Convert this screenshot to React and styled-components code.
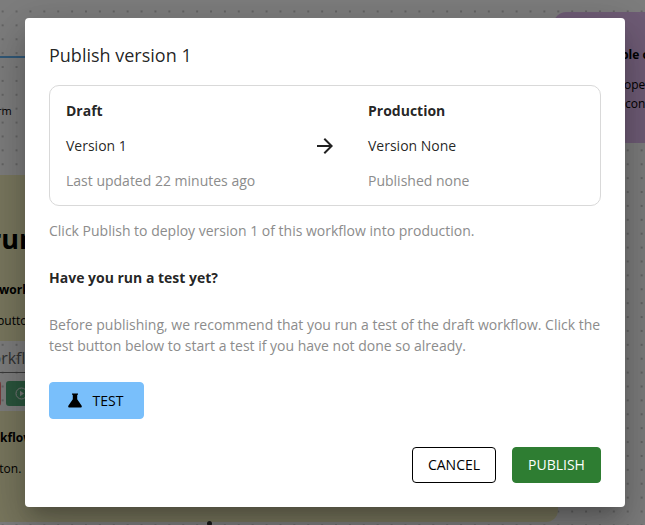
import React from "react";
import styled, { createGlobalStyle } from "styled-components";

const GlobalStyle = createGlobalStyle`
  * { box-sizing: border-box; }
  body { margin: 0; font-family: "Open Sans", sans-serif; overflow: hidden; }
  p, h2, h3 { margin: 0; }
`;

const Canvas = styled.div`
  position: relative;
  width: 645px;
  height: 525px;
  overflow: hidden;
  background-color: #fafafa;
  background-image: radial-gradient(circle, #999 0.4px, transparent 1px);
  background-size: 13.9px 13.9px;
  background-position: -4.3px 4.5px;
`;

const Note = styled.section`
  position: absolute;
  left: ${(p) => p.$x}px;
  top: ${(p) => p.$y}px;
  width: ${(p) => p.$w}px;
  height: ${(p) => p.$h}px;
  border-radius: 12px;
  background: ${(p) => p.$color};
`;

const CanvasText = styled.span`
  position: absolute;
  left: ${(p) => p.$x}px;
  top: ${(p) => p.$y}px;
  font-size: ${(p) => p.$size || 12}px;
  font-weight: ${(p) => (p.$bold ? 700 : 400)};
  line-height: 20px;
  color: ${(p) => p.$color || "#000"};
  white-space: nowrap;
`;

const Edge = styled.div`
  position: absolute;
  left: 0;
  top: 55.5px;
  width: 80px;
  height: 2px;
  background: #62b0ee;
`;

const NodeLine = styled.div`
  position: absolute;
  left: 0;
  top: 372px;
  width: 80px;
  height: 1px;
  background: #777;
`;

const NodeButton = styled.div`
  position: absolute;
  left: ${(p) => p.$x}px;
  top: 381px;
  width: ${(p) => p.$w}px;
  height: 25px;
  display: flex;
  align-items: center;
  padding-left: 9px;
  border-radius: 3px;
  background: ${(p) => p.$color};
`;

const Handle = styled.div`
  position: absolute;
  left: 207px;
  top: 521px;
  width: 5px;
  height: 5px;
  border-radius: 50%;
  background: #333;
`;

const Backdrop = styled.div`
  position: absolute;
  inset: 0;
  display: flex;
  align-items: flex-start;
  justify-content: center;
  padding: 18px 5px 0 10px;
  background: rgba(0, 0, 0, 0.5);
`;

const Dialog = styled.div`
  width: 600px;
  height: 489px;
  padding: 24px;
  border-radius: 4px;
  background: #fff;
  color: rgba(0, 0, 0, 0.87);
  display: flex;
  flex-direction: column;
  align-items: stretch;
  box-shadow: 0 11px 15px -7px rgba(0, 0, 0, 0.2),
    0 24px 38px 3px rgba(0, 0, 0, 0.14), 0 9px 46px 8px rgba(0, 0, 0, 0.12);
`;

const Title = styled.h2`
  font-size: 18px;
  line-height: 27px;
  font-weight: 400;
`;

const VersionCard = styled.div`
  display: grid;
  grid-template-columns: 247px 55px 1fr;
  align-items: center;
  height: 121px;
  margin-top: 16px;
  padding: 0 16px;
  border: 1px solid #d9d9d9;
  border-radius: 10px;
`;

const Version = styled.div`
  display: flex;
  flex-direction: column;
  gap: 14px;
`;

const Text = styled.p`
  font-size: 14px;
  line-height: 21px;
  font-weight: ${(p) => (p.$bold ? 700 : 400)};
  color: ${(p) => (p.$muted ? "#8c8c8c" : "rgba(0, 0, 0, 0.87)")};
`;

const Intro = styled(Text)`
  margin-top: 14px;
`;

const Question = styled(Text)`
  margin-top: 26px;
`;

const Advice = styled(Text)`
  margin-top: 26px;
`;

const Button = styled.button`
  display: flex;
  align-items: center;
  justify-content: center;
  width: ${(p) => p.$w}px;
  height: 36px;
  padding: 0;
  border: 1px solid ${(p) => p.$border || p.$bg};
  border-radius: 4px;
  background: ${(p) => p.$bg};
  color: ${(p) => p.$color || "#000"};
  font: 400 14px/24px "Open Sans", sans-serif;
`;

const TestButton = styled(Button)`
  height: 37px;
  margin-top: 26px;
  padding-right: 2px;
  gap: 11px;
`;

const Actions = styled.div`
  display: flex;
  justify-content: flex-end;
  gap: 16px;
  margin-top: 28px;
`;

const FlaskIcon = () => (
  <svg width="14" height="15" viewBox="0 0 14 15">
    <path d="M4 .5h6v1.300h-.8v4.400l4.300 6.300c.7 1.100.1 2-.9 2H1.400c-1 0-1.600-.9-.9-2l4.300-6.300V1.800H4z" />
  </svg>
);

const ArrowIcon = () => (
  <svg width="24" height="24" viewBox="0 0 24 24" fill="rgba(0,0,0,.87)">
    <path d="m12 4-1.410 1.410L16.170 11H4v2h12.170l-5.580 5.590L12 20l8-8z" />
  </svg>
);

const PlayIcon = () => (
  <svg width="13" height="13" viewBox="0 0 13 13">
    <circle cx="6.500" cy="6.500" r="5.500" fill="none" stroke="#eee" />
    <path d="M5 3.800v5.400L9 6.500z" fill="#eee" />
  </svg>
);

export default function App() {
  return (
    <>
      <GlobalStyle />
      <Canvas>
        <Edge />
        <CanvasText $x={-3} $y={101} $size={11}>rm</CanvasText>
        <Note $x={-30} $y={175} $w={588} $h={166} $color="#f2efbc" />
        <Note $x={-30} $y={411} $w={588} $h={111} $color="#f2efbc" />
        <Note $x={554} $y={12} $w={120} $h={131} $color="#dfb8ed" />
        <CanvasText $x={-11} $y={229} $size={27} $bold>run</CanvasText>
        <CanvasText $x={-1} $y={280} $bold>workflow</CanvasText>
        <CanvasText $x={-3} $y={311}>button</CanvasText>
        <CanvasText $x={-8.5} $y={348} $size={16} $color="#666">orkflow</CanvasText>
        <NodeLine />
        <NodeButton $x={-20} $w={21} $color="#ee7b7b" />
        <NodeButton $x={6} $w={70} $color="#55aa7b"><PlayIcon /></NodeButton>
        <CanvasText $x={0} $y={428} $bold>kflow</CanvasText>
        <CanvasText $x={-5} $y={459}>tton.</CanvasText>
        <CanvasText $x={621} $y={45} $bold>ble of</CanvasText>
        <CanvasText $x={624} $y={75}>oper</CanvasText>
        <CanvasText $x={625} $y={94}>cont</CanvasText>
        <Handle />
        <Backdrop>
          <Dialog role="dialog">
            <Title>Publish version 1</Title>
            <VersionCard>
              <Version>
                <Text $bold>Draft</Text>
                <Text>Version 1</Text>
                <Text $muted>Last updated 22 minutes ago</Text>
              </Version>
              <ArrowIcon />
              <Version>
                <Text $bold>Production</Text>
                <Text>Version None</Text>
                <Text $muted>Published none</Text>
              </Version>
            </VersionCard>
            <Intro $muted>Click Publish to deploy version 1 of this workflow into production.</Intro>
            <Question as="h3" $bold>Have you run a test yet?</Question>
            <Advice $muted>
              Before publishing, we recommend that you run a test of the draft workflow. Click the
              test button below to start a test if you have not done so already.
            </Advice>
            <TestButton $w={95} $bg="#79bffb"><FlaskIcon />TEST</TestButton>
            <Actions>
              <Button $w={84} $bg="#fff" $border="#000">CANCEL</Button>
              <Button $w={89} $bg="#2e7d32" $color="#fff">PUBLISH</Button>
            </Actions>
          </Dialog>
        </Backdrop>
      </Canvas>
    </>
  );
}
